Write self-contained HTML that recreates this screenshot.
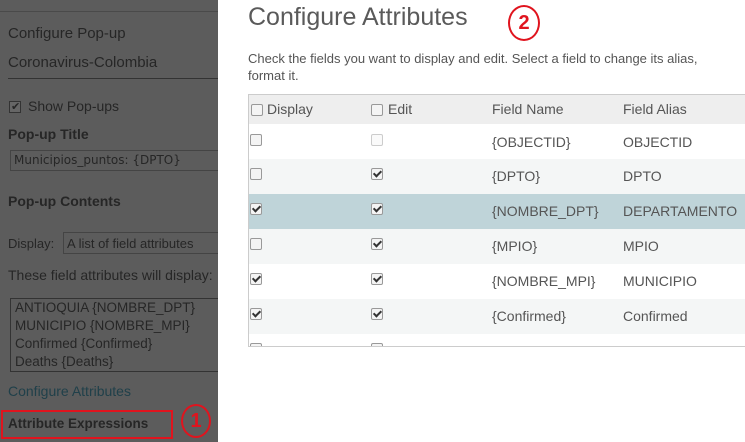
<!DOCTYPE html>
<html><head><style>
*{margin:0;padding:0;box-sizing:border-box}
body{width:745px;height:442px;overflow:hidden;position:relative;background:#fff;font-family:"Liberation Sans",sans-serif}
.l{position:absolute;left:0;top:0;width:218px;height:442px;background:#5c5c5c;color:#262626;overflow:hidden}
.a{position:absolute;white-space:nowrap}
.r{position:absolute;left:218px;top:0;right:0;height:442px;background:#fff;color:#555}
.cb{position:absolute;width:12px;height:12px;border:1px solid #999;border-radius:2px;background:#f4f4f4}
.ck::after{content:"";position:absolute;left:3px;top:0px;width:3px;height:6px;border:solid #333;border-width:0 2px 2px 0;transform:rotate(45deg)}
.row{position:absolute;left:249px;width:496px;height:35px}
.t{position:absolute;font-size:14px;color:#555;white-space:nowrap}
</style></head><body>
<div class="l">
<div class="a" style="left:0;top:11px;width:218px;border-top:1px solid #4a4a4a"></div>
<div class="a" style="left:8px;top:25px;font-size:15px">Configure Pop-up</div>
<div class="a" style="left:8px;top:54px;font-size:15px">Coronavirus-Colombia</div>
<div class="a" style="left:8px;top:78px;width:210px;border-top:1px solid #333"></div>
<div class="a" style="left:9px;top:101px;width:12px;height:12px;border:1px solid #333;background:#666"></div>
<div class="a" style="left:11px;top:100px;font-size:11px">✔</div>
<div class="a" style="left:28px;top:98px;font-size:14px">Show Pop-ups</div>
<div class="a" style="left:8px;top:126px;font-size:14px;font-weight:bold">Pop-up Title</div>
<div class="a" style="left:10px;top:150px;width:220px;height:21px;border:1px solid #444;font-family:'DejaVu Sans',sans-serif;font-size:12px;padding:2px 3px">Municipios_puntos: {DPTO}</div>
<div class="a" style="left:8px;top:193px;font-size:14px;font-weight:bold">Pop-up Contents</div>
<div class="a" style="left:8px;top:236px;font-size:13px">Display:</div>
<div class="a" style="left:63px;top:232px;width:160px;height:22px;border:1px solid #444;font-size:13px;padding:3px 3px">A list of field attributes</div>
<div class="a" style="left:8px;top:267px;font-size:14px">These field attributes will display:</div>
<div class="a" style="left:10px;top:298px;width:220px;height:74px;border:1px solid #333;font-size:13.5px;line-height:18px;padding:0 4px">ANTIOQUIA {NOMBRE_DPT}<br>MUNICIPIO {NOMBRE_MPI}<br>Confirmed {Confirmed}<br>Deaths {Deaths}</div>
<div class="a" style="left:8px;top:383px;font-size:14px;color:#20404a">Configure Attributes</div>
<div class="a" style="left:1px;top:410px;width:172px;height:29px;border:2px solid #e0141e"></div>
<div class="a" style="left:8px;top:416px;font-size:13.5px;font-weight:bold">Attribute Expressions</div>
<div class="a" style="left:181px;top:404px;width:30px;height:34px;border:2px solid #e0141e;border-radius:50%;color:#e0141e;font-weight:bold;font-size:20px;text-align:center;line-height:30px">1</div>
</div>
<div class="r">
<div class="a" style="left:30px;top:3px;font-size:25px;color:#5a5a5a">Configure Attributes</div>
<div class="a" style="left:290px;top:5px;width:32px;height:36px;border:2px solid #e0141e;border-radius:50%;color:#e0141e;font-weight:bold;font-size:20px;text-align:center;line-height:32px">2</div>
<div class="a" style="left:30px;top:50px;font-size:13px;color:#555;line-height:17px">Check the fields you want to display and edit. Select a field to change its alias, <br>format it.</div>
</div>
<div class="a" style="left:248px;top:94px;width:500px;height:253px;border:1px solid #ccc"></div>
<div class="row" style="top:95px;height:29px;background:#eee"><div class="cb" style="left:2px;top:9px"></div><div class="t" style="left:18px;top:6px">Display</div><div class="cb" style="left:122px;top:9px"></div><div class="t" style="left:139px;top:6px">Edit</div><div class="t" style="left:243px;top:6px">Field Name</div><div class="t" style="left:374px;top:6px">Field Alias</div></div>
<div class="row" style="top:124px;background:#fff"><div class="cb" style="left:1px;top:10px"></div><div class="cb" style="left:122px;top:10px;border-color:#ccc;background:#fafafa"></div><div class="t" style="left:243px;top:10px">{OBJECTID}</div><div class="t" style="left:374px;top:10px">OBJECTID</div></div>
<div class="row" style="top:159px;background:#f4f6f6"><div class="cb" style="left:1px;top:9px"></div><div class="cb ck" style="left:122px;top:9px"></div><div class="t" style="left:243px;top:9px">{DPTO}</div><div class="t" style="left:374px;top:9px">DPTO</div></div>
<div class="row" style="top:194px;background:#bfd4d9"><div class="cb ck" style="left:1px;top:9px"></div><div class="cb ck" style="left:122px;top:9px"></div><div class="t" style="left:243px;top:9px">{NOMBRE_DPT}</div><div class="t" style="left:374px;top:9px">DEPARTAMENTO</div></div>
<div class="row" style="top:229px;background:#f4f6f6"><div class="cb" style="left:1px;top:9px"></div><div class="cb ck" style="left:122px;top:9px"></div><div class="t" style="left:243px;top:9px">{MPIO}</div><div class="t" style="left:374px;top:9px">MPIO</div></div>
<div class="row" style="top:264px;background:#fff"><div class="cb ck" style="left:1px;top:9px"></div><div class="cb ck" style="left:122px;top:9px"></div><div class="t" style="left:243px;top:9px">{NOMBRE_MPI}</div><div class="t" style="left:374px;top:9px">MUNICIPIO</div></div>
<div class="row" style="top:299px;background:#f4f6f6"><div class="cb ck" style="left:1px;top:9px"></div><div class="cb ck" style="left:122px;top:9px"></div><div class="t" style="left:243px;top:9px">{Confirmed}</div><div class="t" style="left:374px;top:9px">Confirmed</div></div>
<div class="row" style="top:334px;height:12px;background:#fff;overflow:hidden"><div class="cb" style="left:1px;top:9px"></div><div class="cb" style="left:122px;top:9px"></div></div>
</body></html>
